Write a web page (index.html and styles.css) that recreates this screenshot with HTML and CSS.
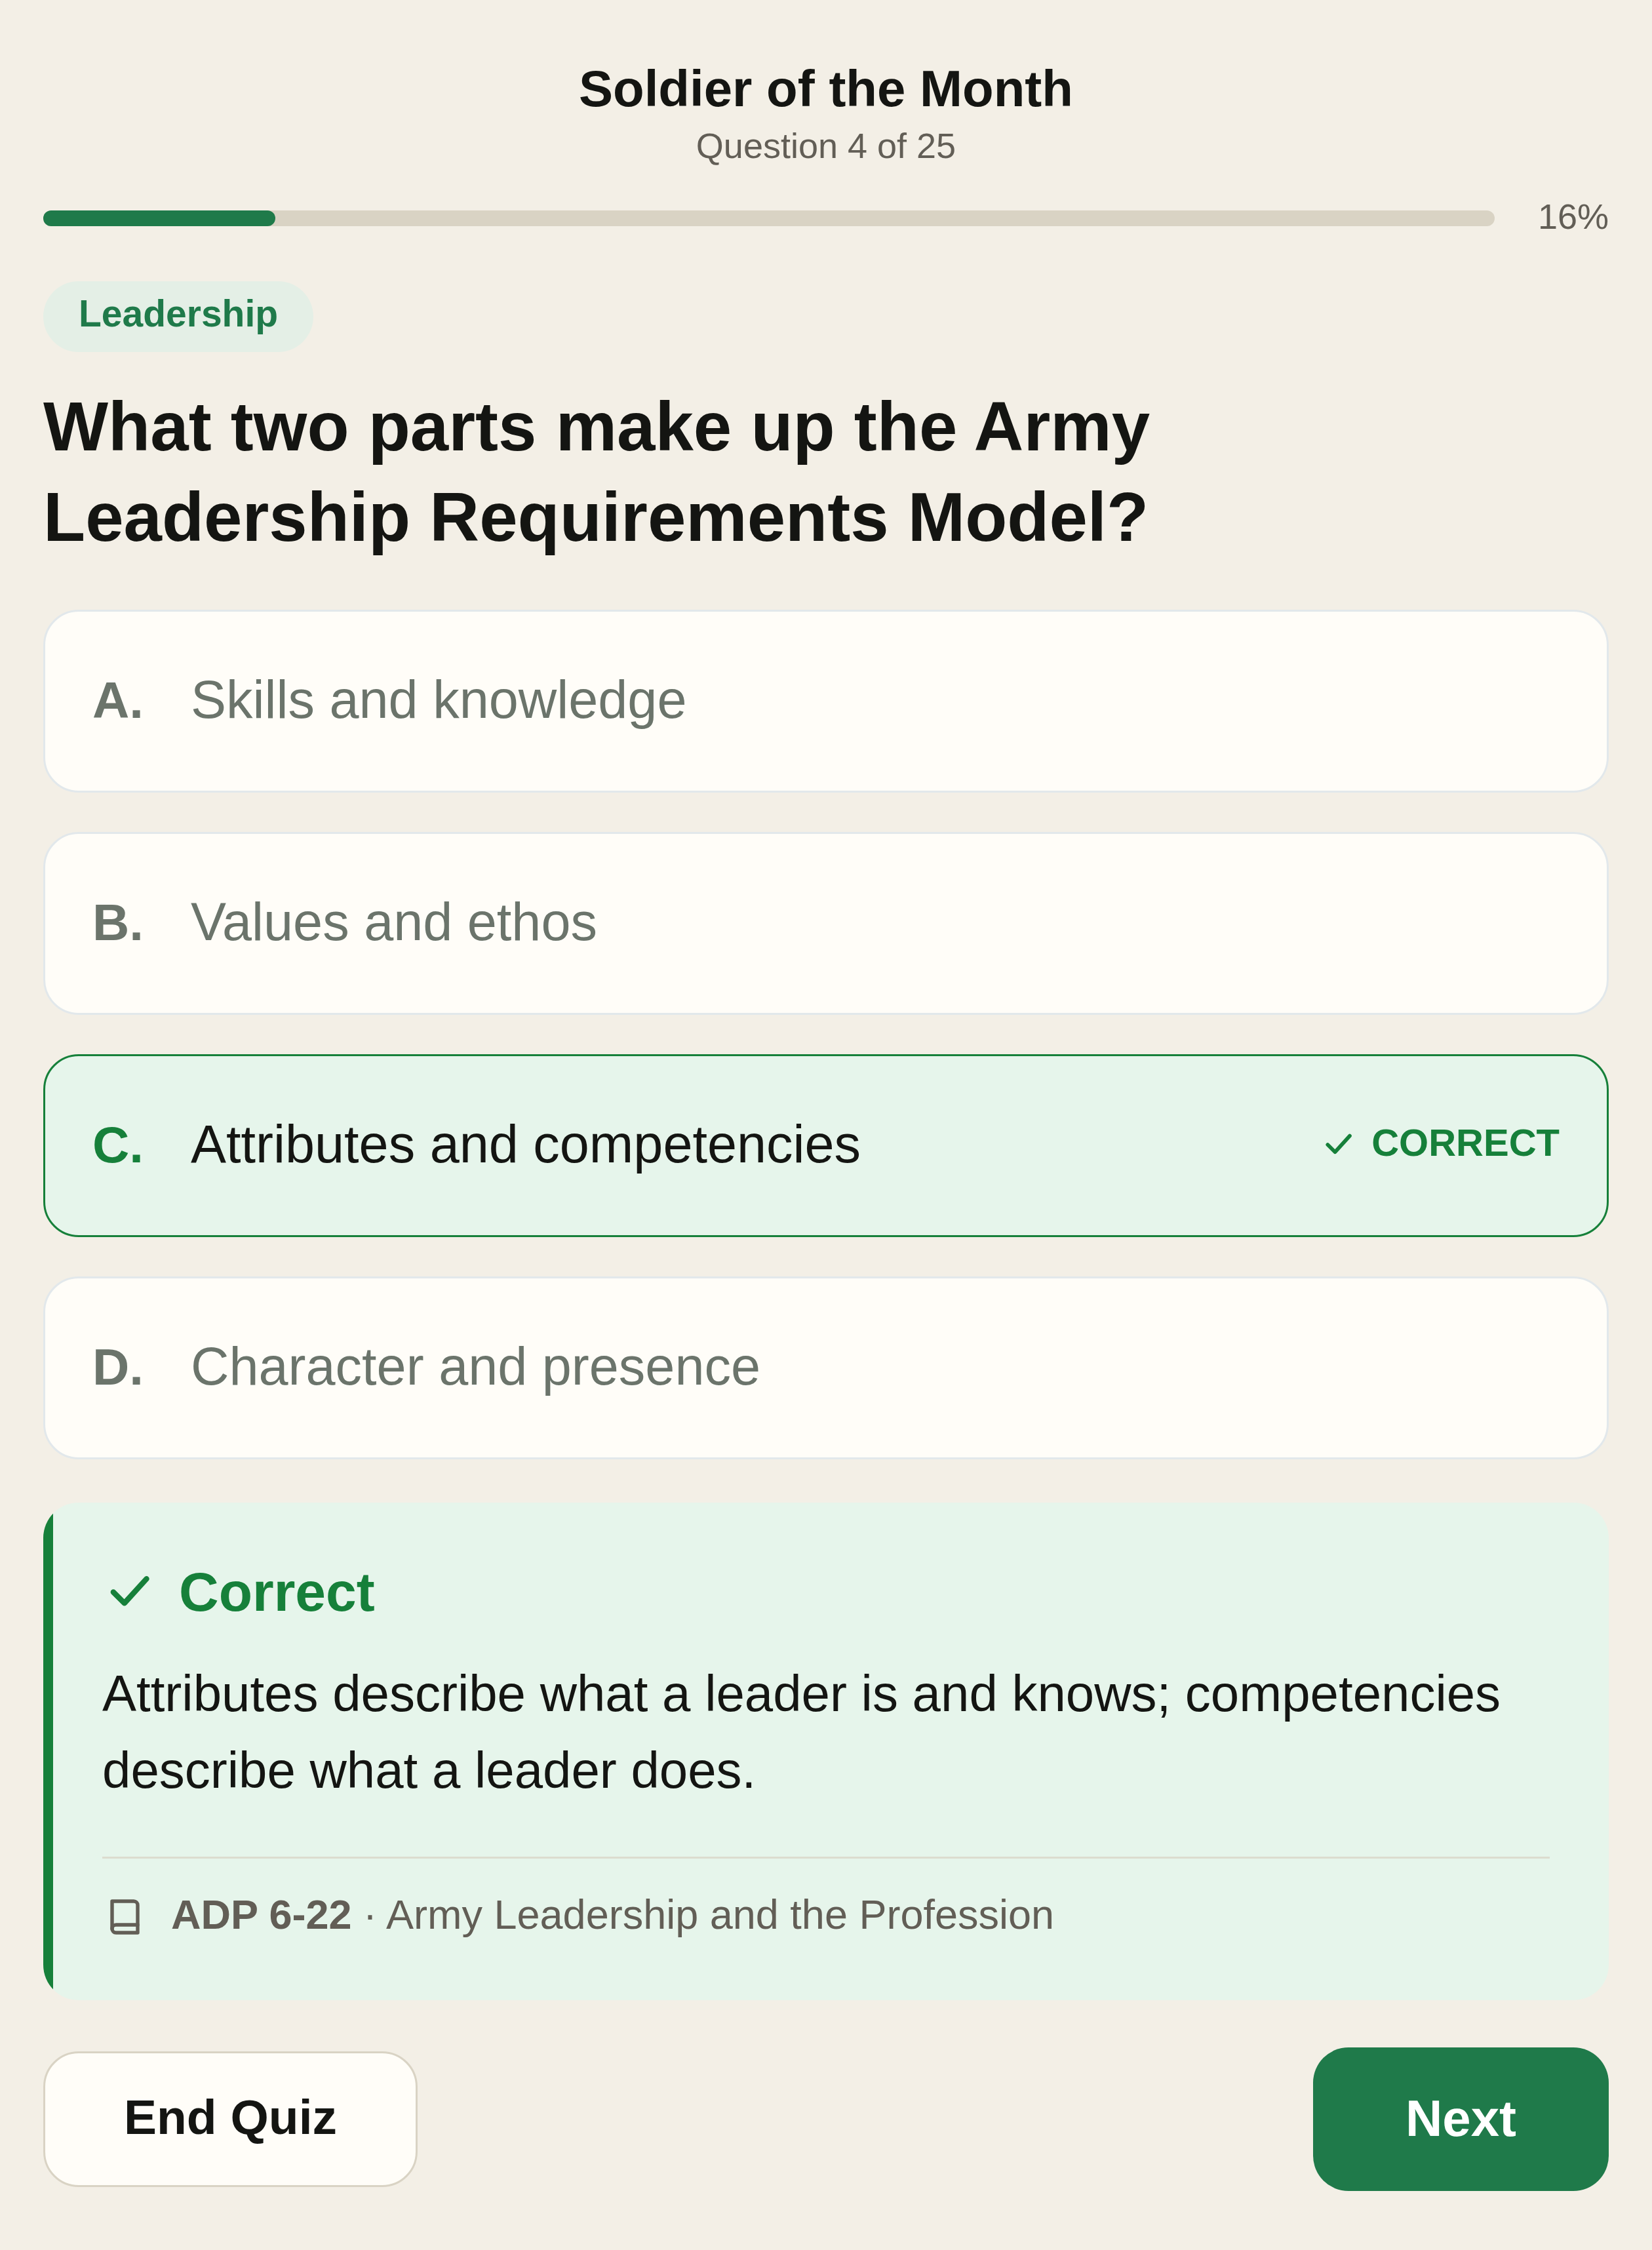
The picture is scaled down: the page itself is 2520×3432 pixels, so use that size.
FILE: index.html
```html
<!DOCTYPE html>
<html lang="en">
  <head>
    <meta charset="UTF-8" />
    <title>Soldier of the Month</title>
    <link rel="stylesheet" href="styles.css">
  </head>
  <body>
    <header class="quiz-header">
      <h1>Soldier of the Month</h1>
      <p>Question 4 of 25</p>
    </header>

    <div class="progress-row">
      <div class="progress-track">
        <div class="progress-fill" style="width: 16%"></div>
      </div>
      <span class="progress-value">16%</span>
    </div>

    <main>
      <span class="category">Leadership</span>
      <h2 class="question">What two parts make up the Army Leadership Requirements Model?</h2>

      <div class="options">
        <button type="button" class="option">
          <span class="letter">A.</span>
          <span class="answer">Skills and knowledge</span>
        </button>
        <button type="button" class="option">
          <span class="letter">B.</span>
          <span class="answer">Values and ethos</span>
        </button>
        <button type="button" class="option correct">
          <span class="letter">C.</span>
          <span class="answer">Attributes and competencies</span>
          <span class="status">
            <svg class="status-icon" viewBox="0 0 24 24" aria-hidden="true">
              <path d="M5 12l5 5l10 -11" />
            </svg>
            <span class="status-text">CORRECT</span>
          </span>
        </button>
        <button type="button" class="option">
          <span class="letter">D.</span>
          <span class="answer">Character and presence</span>
        </button>
      </div>

      <section class="feedback">
        <h3>
          <svg class="feedback-icon" viewBox="0 0 24 24" aria-hidden="true">
            <path d="M5 12l5 5l10 -11" />
          </svg>
          Correct
        </h3>
        <p class="explanation">Attributes describe what a leader is and knows; competencies describe what a leader does.</p>
        <div class="source">
          <svg class="book-icon" viewBox="0 0 24 24" aria-hidden="true">
            <path d="M5 4h11a2 2 0 0 1 2 2v14h-11a2 2 0 0 1 -2 -2z" />
            <path d="M5 18a2 2 0 0 1 2 -2h11" />
          </svg>
          <span class="source-text"><strong>ADP 6-22</strong> · Army Leadership and the Profession</span>
        </div>
      </section>
    </main>

    <footer class="actions">
      <button type="button" class="end-button">End Quiz</button>
      <button type="button" class="next-button">Next</button>
    </footer>
  </body>
</html>
```

FILE: styles.css
```css
* {
  box-sizing: border-box;
}

body {
  margin: 0;
  padding: 90px 66px;
  font-family: "Liberation Sans", Arial, sans-serif;
  background-color: #f3efe6;
  color: #141512;
}

h1,
h2,
h3,
p {
  margin: 0;
}

button {
  font-family: inherit;
  cursor: pointer;
}

svg {
  flex: none;
  fill: none;
  stroke: currentColor;
  stroke-linecap: round;
  stroke-linejoin: round;
}

.quiz-header {
  text-align: center;
}

.quiz-header h1 {
  font-size: 78px;
  line-height: 90px;
}

.quiz-header p {
  margin-top: 9px;
  font-size: 54px;
  line-height: 66px;
  color: #625e56;
}

.progress-row {
  display: flex;
  align-items: center;
  gap: 66px;
  margin-top: 42px;
  font-size: 54px;
  line-height: 66px;
  color: #625e56;
}

.progress-track {
  flex: 1;
  height: 24px;
  border-radius: 12px;
  background-color: #d9d3c4;
}

.progress-fill {
  height: 100%;
  border-radius: 12px;
  background-color: #1f7a4a;
}

.progress-value,
.status-text,
.source-text {
  padding-bottom: 6px;
}

.category {
  display: block;
  width: fit-content;
  margin-top: 60px;
  padding: 16px 54px 26px;
  border-radius: 54px;
  font-size: 57px;
  font-weight: bold;
  line-height: 66px;
  background-color: #e4efe6;
  color: #1f7a4a;
}

.question {
  max-width: 1900px;
  margin-top: 45px;
  font-size: 105px;
  line-height: 138px;
}

.options {
  display: flex;
  flex-direction: column;
  gap: 60px;
  margin-top: 72px;
}

.option {
  display: flex;
  align-items: baseline;
  gap: 72px;
  width: 100%;
  padding: 88px 72px 91px;
  border: 3px solid #e2e8eb;
  border-radius: 54px;
  font-size: 81px;
  line-height: 93px;
  text-align: left;
  background-color: #fffdf8;
  color: #6b746b;
}

.option .letter {
  font-size: 78px;
  font-weight: bold;
}

.option .answer {
  flex: 1;
}

.option.correct {
  border-color: #16803a;
  background-color: #e6f5eb;
  color: #141512;
}

.option.correct .letter,
.status {
  color: #16803a;
}

.status {
  display: flex;
  align-items: center;
  align-self: center;
  gap: 24px;
  font-size: 58px;
  font-weight: bold;
  line-height: 66px;
}

.status-icon {
  width: 54px;
  height: 54px;
  stroke-width: 2.5;
}

.feedback {
  margin-top: 66px;
  padding: 90px;
  border-radius: 54px;
  background: linear-gradient(to right, #16803a 15px, #e6f5eb 15px);
}

.feedback h3 {
  display: flex;
  align-items: center;
  gap: 36px;
  font-size: 84px;
  line-height: 93px;
  color: #16803a;
}

.feedback-icon {
  width: 81px;
  height: 81px;
  stroke-width: 2.5;
}

.explanation {
  margin-top: 50px;
  font-size: 78px;
  line-height: 117px;
}

.source {
  display: flex;
  align-items: center;
  gap: 33px;
  margin-top: 73px;
  padding-top: 51px;
  border-top: 3px solid #dcdccf;
  font-size: 63px;
  line-height: 69px;
  color: #625e56;
}

.book-icon {
  width: 72px;
  height: 72px;
  stroke-width: 1.8;
}

.actions {
  display: flex;
  justify-content: space-between;
  align-items: center;
  margin-top: 72px;
}

.end-button,
.next-button {
  border-radius: 54px;
  font-weight: bold;
}

.end-button {
  padding: 54px 120px 60px;
  border: 3px solid #d9d3c4;
  font-size: 75px;
  line-height: 87px;
  background-color: #fffdf8;
  color: #141512;
}

.next-button {
  padding: 63px 141px 66px;
  border: none;
  font-size: 78px;
  line-height: 90px;
  background-color: #1f7a4a;
  color: #fff;
}
```
